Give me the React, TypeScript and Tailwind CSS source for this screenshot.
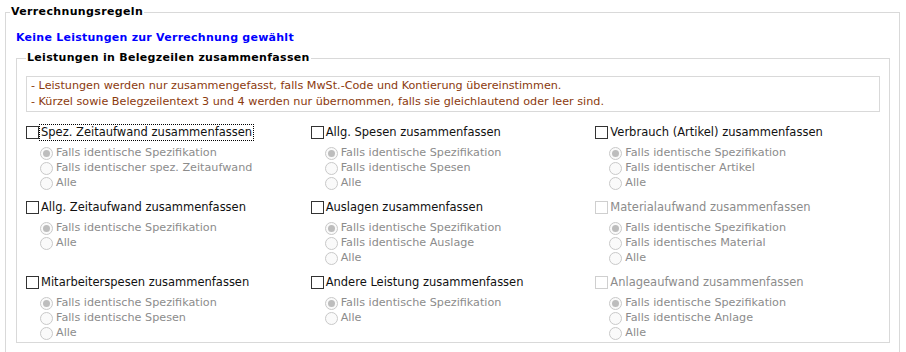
import React from 'react';

type Group = {
  label: string;
  options: string[];
  disabled?: boolean;
  focused?: boolean;
};

const columns: Group[][] = [
  [
    { label: 'Spez. Zeitaufwand zusammenfassen', options: ['Falls identische Spezifikation', 'Falls identischer spez. Zeitaufwand', 'Alle'], focused: true },
    { label: 'Allg. Zeitaufwand zusammenfassen', options: ['Falls identische Spezifikation', 'Alle'] },
    { label: 'Mitarbeiterspesen zusammenfassen', options: ['Falls identische Spezifikation', 'Falls identische Spesen', 'Alle'] },
  ],
  [
    { label: 'Allg. Spesen zusammenfassen', options: ['Falls identische Spezifikation', 'Falls identische Spesen', 'Alle'] },
    { label: 'Auslagen zusammenfassen', options: ['Falls identische Spezifikation', 'Falls identische Auslage', 'Alle'] },
    { label: 'Andere Leistung zusammenfassen', options: ['Falls identische Spezifikation', 'Alle'] },
  ],
  [
    { label: 'Verbrauch (Artikel) zusammenfassen', options: ['Falls identische Spezifikation', 'Falls identischer Artikel', 'Alle'] },
    { label: 'Materialaufwand zusammenfassen', options: ['Falls identische Spezifikation', 'Falls identisches Material', 'Alle'], disabled: true },
    { label: 'Anlageaufwand zusammenfassen', options: ['Falls identische Spezifikation', 'Falls identische Anlage', 'Alle'], disabled: true },
  ],
];

const Radio: React.FC<{ checked?: boolean; text: string }> = ({ checked, text }) => (
  <div className="flex items-center h-[15px]">
    <span className="w-[13px] h-[13px] rounded-full border border-[#c9c9c9] bg-[#fafafa] flex items-center justify-center shrink-0">
      {checked && <span className="w-[7px] h-[7px] rounded-full bg-[#bdbdbd]" />}
    </span>
    <span className="ml-[3px] text-[#8c8c8c] text-[11.2px]">{text}</span>
  </div>
);

const CheckGroup: React.FC<{ group: Group }> = ({ group }) => (
  <div className="flex flex-col">
    <div className="flex items-center h-[17px]">
      <span className={`w-[13px] h-[13px] border bg-white shrink-0 ${group.disabled ? 'border-[#cfcfcf]' : 'border-[#333333]'}`} />
      <span
        className={`ml-[1px] px-[1px] leading-[15px] ${group.focused ? 'outline outline-1 outline-dotted outline-black' : ''} ${group.disabled ? 'text-[#8c8c8c]' : 'text-[#111111]'}`}
      >
        {group.label}
      </span>
    </div>
    <div className="mt-[5px] ml-[14px] flex flex-col">
      {group.options.map((o, i) => (
        <Radio key={i} text={o} checked={i === 0} />
      ))}
    </div>
  </div>
);

export default function App() {
  return (
    <div className="w-[906px] h-[352px] bg-white overflow-hidden font-['DejaVu_Sans',sans-serif] text-[11px]">
      <fieldset className="ml-[5px] mr-[6px] mt-[4px] border border-[#d9d9d9] pl-[4px] pr-[9px] pb-[20px]">
        <legend className="px-[1px] font-bold leading-[16px] tracking-[0.35px] text-black">Verrechnungsregeln</legend>
        <div className="ml-[6px] mt-[10px] font-bold tracking-[0.25px] text-[#0000ff] leading-[16px]">Keine Leistungen zur Verrechnung gewählt</div>
        <fieldset className="ml-[6px] mt-[4px] border border-[#d9d9d9] px-[9px] pb-[2px]">
          <legend className="px-[1px] font-bold leading-[16px] tracking-[0.3px] text-black">Leistungen in Belegzeilen zusammenfassen</legend>
          <div className="mt-[10px] border border-[#d9d9d9] px-[4px] py-px leading-[16px] text-[11.2px] text-[#8b3a0e]">
            <div>- Leistungen werden nur zusammengefasst, falls MwSt.-Code und Kontierung übereinstimmen.</div>
            <div>- Kürzel sowie Belegzeilentext 3 und 4 werden nur übernommen, falls sie gleichlautend oder leer sind.</div>
          </div>
          <div className="mt-[12px] grid grid-cols-3 text-[11.5px]">
            {columns.map((col, ci) => (
              <div key={ci} className="flex flex-col gap-[9px]">
                {col.map((g, gi) => (
                  <div key={gi} className="h-[66px]">
                    <CheckGroup group={g} />
                  </div>
                ))}
              </div>
            ))}
          </div>
        </fieldset>
      </fieldset>
    </div>
  );
}
